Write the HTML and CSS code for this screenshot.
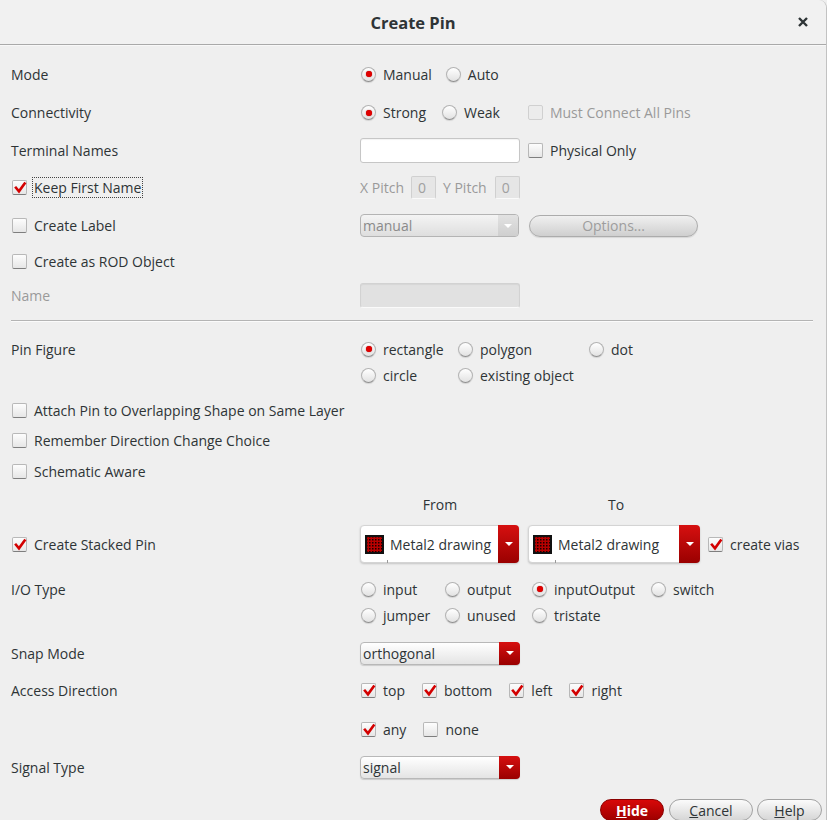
FILE: index.html
```html
<!DOCTYPE html>
<html>
<head>
<meta charset="utf-8">
<link rel="stylesheet" href="styles.css">
</head>
<body>
<div class="dialog">
  <div class="titlebar">
    <span class="title">Create Pin</span>
    <svg class="close" viewBox="0 0 12 12"><path d="M2 2 L10 10 M10 2 L2 10"/></svg>
  </div>
  <div class="content">
    <div class="row r-mode">
      <div class="lbl">Mode</div>
      <div class="ctl">
        <span class="opt o-man"><span class="rb on"></span>Manual</span>
        <span class="opt"><span class="rb"></span>Auto</span>
      </div>
    </div>
    <div class="row r-conn">
      <div class="lbl">Connectivity</div>
      <div class="ctl">
        <span class="opt"><span class="rb on"></span>Strong</span>
        <span class="opt w-weak"><span class="rb"></span>Weak</span>
        <span class="opt dis"><span class="cb disbox"></span>Must Connect All Pins</span>
      </div>
    </div>
    <div class="row r-term">
      <div class="lbl">Terminal Names</div>
      <div class="ctl">
        <span class="input"></span>
        <span class="opt ml8"><span class="cb"></span>Physical Only</span>
      </div>
    </div>
    <div class="row r-keep">
      <div class="lbl"><span class="cb"><svg viewBox="0 0 15 15"><polyline points="3.2,7.2 6.4,11 12.4,2.8"/></svg></span><span class="focus">Keep First Name</span></div>
      <div class="ctl dis">
        <span>X Pitch</span><span class="pitch">0</span>
        <span>Y Pitch</span><span class="pitch">0</span>
      </div>
    </div>
    <div class="row r-label">
      <div class="lbl"><span class="cb"></span>Create Label</div>
      <div class="ctl">
        <span class="combo dcombo"><span class="ctext">manual</span><span class="dbtn"><i class="tri"></i></span></span>
        <span class="pill">Options...</span>
      </div>
    </div>
    <div class="row r-rod">
      <div class="lbl"><span class="cb"></span>Create as ROD Object</div>
    </div>
    <div class="row r-name">
      <div class="lbl dis">Name</div>
      <div class="ctl"><span class="input disinput"></span></div>
    </div>
    <div class="sep"></div>
    <div class="row r-fig">
      <div class="lbl lbl-top">Pin Figure</div>
      <div class="grid fig">
        <span class="opt"><span class="rb on"></span>rectangle</span>
        <span class="opt"><span class="rb"></span>polygon</span>
        <span class="opt"><span class="rb"></span>dot</span>
        <span class="opt"><span class="rb"></span>circle</span>
        <span class="opt"><span class="rb"></span>existing object</span>
      </div>
    </div>
    <div class="row r-attach">
      <div class="lbl wide"><span class="cb"></span>Attach Pin to Overlapping Shape on Same Layer</div>
    </div>
    <div class="row r-rem">
      <div class="lbl wide"><span class="cb"></span>Remember Direction Change Choice</div>
    </div>
    <div class="row r-rem">
      <div class="lbl wide"><span class="cb"></span>Schematic Aware</div>
    </div>
    <div class="row r-fromto">
      <div class="lbl"></div>
      <div class="ctl">
        <span class="hdr from">From</span>
        <span class="hdr to">To</span>
      </div>
    </div>
    <div class="row r-stack">
      <div class="lbl"><span class="cb"><svg viewBox="0 0 15 15"><polyline points="3.2,7.2 6.4,11 12.4,2.8"/></svg></span>Create Stacked Pin</div>
      <div class="ctl">
        <span class="combo lcombo">
          <svg class="layer" viewBox="0 0 19 19"><defs><pattern id="dp" width="3" height="3" patternUnits="userSpaceOnUse"><rect width="3" height="3" fill="#b80000"/><rect x="1" y="1" width="1.5" height="1.5" fill="#1a0000"/></pattern></defs><rect width="19" height="19" fill="#111"/><rect x="2" y="2" width="15" height="15" fill="url(#dp)"/></svg>
          <span class="ctext dark">Metal2 drawing</span>
          <span class="rbtn"><i class="tri"></i></span>
        </span>
        <span class="combo lcombo c2">
          <svg class="layer" viewBox="0 0 19 19"><rect width="19" height="19" fill="#111"/><rect x="2" y="2" width="15" height="15" fill="url(#dp)"/></svg>
          <span class="ctext dark">Metal2 drawing</span>
          <span class="rbtn"><i class="tri"></i></span>
        </span>
        <span class="opt ml8"><span class="cb"><svg viewBox="0 0 15 15"><polyline points="3.2,7.2 6.4,11 12.4,2.8"/></svg></span>create vias</span>
      </div>
    </div>
    <div class="row r-io">
      <div class="lbl lbl-top">I/O Type</div>
      <div class="grid io">
        <span class="opt"><span class="rb"></span>input</span>
        <span class="opt"><span class="rb"></span>output</span>
        <span class="opt"><span class="rb on"></span>inputOutput</span>
        <span class="opt"><span class="rb"></span>switch</span>
        <span class="opt"><span class="rb"></span>jumper</span>
        <span class="opt"><span class="rb"></span>unused</span>
        <span class="opt"><span class="rb"></span>tristate</span>
      </div>
    </div>
    <div class="row r-snap">
      <div class="lbl">Snap Mode</div>
      <div class="ctl">
        <span class="combo scombo"><span class="ctext dark">orthogonal</span><span class="rbtn"><i class="tri"></i></span></span>
      </div>
    </div>
    <div class="row r-acc">
      <div class="lbl">Access Direction</div>
      <div class="ctl">
        <span class="opt ck"><span class="cb"><svg viewBox="0 0 15 15"><polyline points="3.2,7.2 6.4,11 12.4,2.8"/></svg></span>top</span>
        <span class="opt ck"><span class="cb"><svg viewBox="0 0 15 15"><polyline points="3.2,7.2 6.4,11 12.4,2.8"/></svg></span>bottom</span>
        <span class="opt ck"><span class="cb"><svg viewBox="0 0 15 15"><polyline points="3.2,7.2 6.4,11 12.4,2.8"/></svg></span>left</span>
        <span class="opt ck"><span class="cb"><svg viewBox="0 0 15 15"><polyline points="3.2,7.2 6.4,11 12.4,2.8"/></svg></span>right</span>
      </div>
    </div>
    <div class="row r-any">
      <div class="lbl"></div>
      <div class="ctl">
        <span class="opt ck"><span class="cb"><svg viewBox="0 0 15 15"><polyline points="3.2,7.2 6.4,11 12.4,2.8"/></svg></span>any</span>
        <span class="opt ck"><span class="cb"></span>none</span>
      </div>
    </div>
    <div class="row r-signal">
      <div class="lbl">Signal Type</div>
      <div class="ctl">
        <span class="combo scombo"><span class="ctext dark">signal</span><span class="rbtn"><i class="tri"></i></span></span>
      </div>
    </div>
    <div class="buttons">
      <span class="btn hide"><u>H</u>ide</span>
      <span class="btn cancel"><u>C</u>ancel</span>
      <span class="btn help"><u>H</u>elp</span>
    </div>
  </div>
</div>
</body>
</html>
```

FILE: styles.css
```css
html, body {
  margin: 0;
  padding: 0;
  background: #efefef;
}
body {
  font-family: "Open Sans", "Noto Sans", sans-serif;
  font-size: 14px;
  color: #2e3436;
}
.dialog {
  width: 826px;
  height: 820px;
  overflow: hidden;
  background: #efefef;
  border-right: 1px solid #c2c2c2;
  border-top-right-radius: 8px;
}
.titlebar {
  height: 44px;
  border-bottom: 1px solid #a9a9a9;
  box-shadow: 0 1px 0 #f8f8f8;
  background: #f1f1f1;
  display: flex;
  align-items: center;
  justify-content: center;
  position: relative;
  border-top-right-radius: 8px;
}
.title {
  font-weight: bold;
  font-size: 16.5px;
  color: #2e3436;
}
.close {
  position: absolute;
  right: 17px;
  top: 16px;
  width: 12px;
  height: 12px;
}
.close path {
  stroke: #2e3436;
  stroke-width: 2.4;
  fill: none;
}
.content {
  padding-top: 10px;
}
.row {
  display: flex;
  align-items: center;
}
.lbl {
  width: 360px;
  box-sizing: border-box;
  padding-left: 11px;
  display: flex;
  align-items: center;
  flex: none;
  white-space: nowrap;
}
.lbl .cb {
  margin-left: 1px;
  margin-right: 7px;
}
.lbl-top {
  align-self: flex-start;
  height: 26px;
}
.ctl {
  display: flex;
  align-items: center;
  white-space: nowrap;
}
.dis { color: #9a9a9a; }

.r-mode { height: 38px; }
.r-conn { height: 39px; }
.r-term { height: 37px; }
.r-keep { height: 37px; }
.r-label { height: 39px; }
.r-rod { height: 33px; }
.r-name { height: 34px; }
.r-attach { height: 30px; margin-top: 7px; }
.r-rem { height: 31px; }
.r-fromto { height: 34px; }
.r-stack { height: 46px; }
.r-io { margin-top: 9px; }
.r-snap { height: 36px; margin-top: 7px; }
.r-acc { height: 38px; }
.r-any { height: 40px; }
.r-signal { height: 36px; }

.sep {
  margin: 8px 13px 14px 11px;
  height: 1px;
  background: #b4b4b4;
  border-bottom: 1px solid #fbfbfb;
}

/* option items */
.opt {
  display: inline-flex;
  align-items: center;
  margin-right: 16px;
}
.opt .rb, .opt .cb { margin-right: 7px; }
.ctl .opt:first-child { margin-left: 1px; }
.o-man { margin-right: 14px; }
.w-weak { margin-right: 28px; }
.ml8 { margin-left: 8px; }
.opt.ck { margin-right: 17px; }

/* radio */
.rb {
  width: 13px;
  height: 13px;
  border-radius: 50%;
  border: 1px solid #b3b3b3;
  border-bottom-color: #8e8e8e;
  background: linear-gradient(#ffffff, #e2e2e2);
  box-shadow: 0 1px 1px rgba(0,0,0,0.12);
  display: inline-flex;
  align-items: center;
  justify-content: center;
  flex: none;
}
.rb.on::after {
  content: "";
  width: 6px;
  height: 6px;
  border-radius: 50%;
  background: #e00000;
  box-shadow: 0 0 1px #900;
}

/* checkbox */
.cb {
  width: 13px;
  height: 13px;
  border: 1px solid #b8b8b8;
  border-bottom-color: #7e7e7e;
  border-radius: 2px;
  background: linear-gradient(#fdfdfd, #e6e6e6);
  display: inline-flex;
  flex: none;
  position: relative;
}
.cb svg {
  position: absolute;
  left: 0;
  top: 0;
  width: 14px;
  height: 14px;
}
.cb polyline {
  fill: none;
  stroke: #d30000;
  stroke-width: 2.8;
  stroke-linecap: square;
  stroke-linejoin: miter;
}
.disbox {
  border-color: #d0d0d0;
  background: #ececec;
}
.focus {
  outline: 1px dotted #444;
  padding: 0 1px;
  margin-left: -1px;
}

/* inputs */
.input {
  display: inline-block;
  width: 158px;
  height: 23px;
  background: #fff;
  border: 1px solid #c6c6c6;
  border-radius: 3px;
  box-shadow: inset 0 1px 1px rgba(0,0,0,0.05);
}
.disinput {
  background: #e1e1e1;
  border-color: #d2d2d2;
  border-bottom-color: #fafafa;
}
.pitch {
  display: inline-block;
  box-sizing: border-box;
  width: 25px;
  height: 23px;
  margin: 0 7px 0 7px;
  padding-left: 6px;
  line-height: 21px;
  background: #e6e6e6;
  border: 1px solid #d0d0d0;
  border-bottom-color: #fafafa;
  border-radius: 2px;
  color: #a0a0a0;
}
.ctl .pitch:last-child { margin-right: 0; margin-left: 8px; }

/* combos */
.combo {
  display: inline-flex;
  align-items: center;
  box-sizing: border-box;
  position: relative;
  border-radius: 4px;
}
.ctext { padding-left: 2px; flex: 1; }
.dark { color: #2e3436; }
.dcombo {
  width: 159px;
  height: 23px;
  border: 1px solid #b4b4b4;
  background: linear-gradient(#f4f4f4, #dedede);
  color: #8a8a8a;
}
.dbtn {
  width: 20px;
  height: 100%;
  background: linear-gradient(#e2e2e2, #cfcfcf);
  border-radius: 0 3px 3px 0;
  display: flex;
  align-items: center;
  justify-content: center;
}
.pill {
  margin-left: 10px;
  width: 169px;
  height: 22px;
  box-sizing: border-box;
  border: 1px solid #acacac;
  border-radius: 11px;
  background: linear-gradient(#f0f0f0, #cfcfcf);
  color: #9d9d9d;
  display: inline-flex;
  align-items: center;
  justify-content: center;
  box-shadow: 0 1px 1px rgba(0,0,0,0.1);
}
.tri {
  width: 0;
  height: 0;
  border-left: 4px solid transparent;
  border-right: 4px solid transparent;
  border-top: 4px solid #fff;
}
.rbtn {
  width: 21px;
  align-self: stretch;
  margin: -1px -1px -1px 0;
  background: linear-gradient(#d61010, #9a0000);
  border-radius: 0 4px 4px 0;
  display: flex;
  align-items: center;
  justify-content: center;
}
.scombo {
  width: 160px;
  height: 23px;
  border: 1px solid #b8b8b8;
  background: linear-gradient(#ffffff, #e4e4e4);
  box-shadow: 0 1px 1px rgba(0,0,0,0.15);
}
.lcombo {
  width: 159px;
  height: 38px;
  border: 1px solid #d4d4d4;
  background: #fff;
  box-shadow: 0 1px 2px rgba(0,0,0,0.18);
}
.lcombo .ctext { padding-left: 6px; }
.c2 { margin-left: 9px; width: 172px; }
.layer {
  width: 19px;
  height: 19px;
  margin-left: 4px;
  flex: none;
}
.lcombo::after {
  content: "";
  position: absolute;
  left: 26px;
  bottom: -1px;
  width: 1px;
  height: 3px;
  background: #999;
}

/* grids */
.grid { display: grid; grid-auto-rows: 26px; align-items: center; }
.grid .opt { margin: 0; }
.fig { grid-template-columns: 97px 131px auto; margin-left: 1px; }
.io { grid-template-columns: 84px 87px 119px auto; margin-left: 1px; }

.hdr { display: inline-block; text-align: center; }
.from { width: 160px; }
.to { width: 176px; margin-left: 8px; }

/* buttons */
.buttons {
  display: flex;
  justify-content: flex-end;
  gap: 4px;
  margin-top: 14px;
  padding-right: 4px;
}
.btn {
  box-sizing: border-box;
  height: 22px;
  border-radius: 11px;
  display: inline-flex;
  align-items: center;
  justify-content: center;
  font-size: 14px;
}
.hide {
  width: 64px;
  background: linear-gradient(#d80808, #9e0000);
  border: 1px solid #8a0000;
  color: #fff;
  font-weight: bold;
  margin-right: 1px;
}
.cancel, .help {
  background: linear-gradient(#fbfbfb, #d6d6d6);
  border: 1px solid #a2a2a2;
  color: #2e3436;
}
.cancel { width: 84px; }
.help { width: 65px; }
```
